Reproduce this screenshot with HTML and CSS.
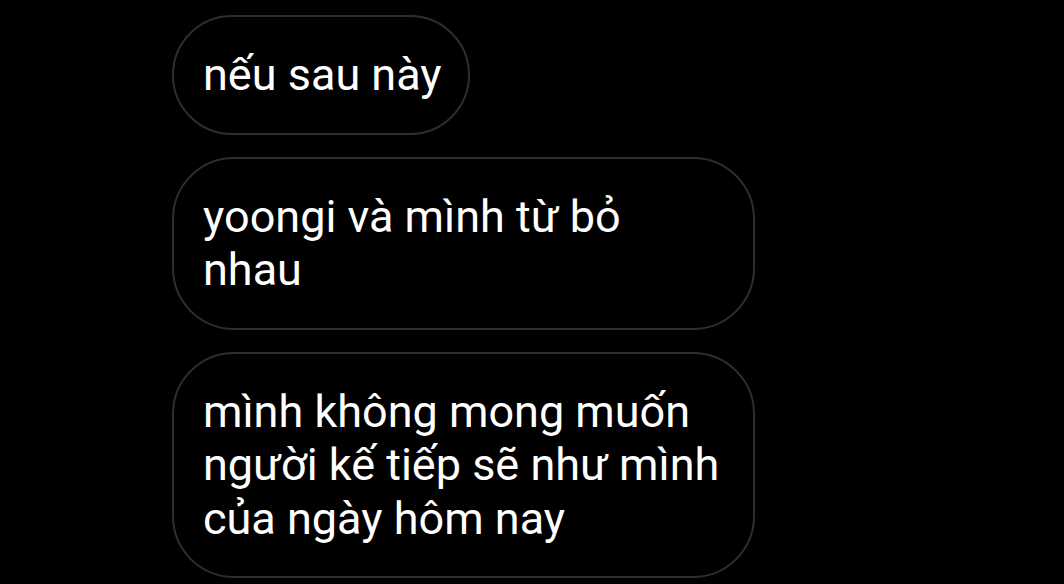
FILE: index.html
```html
<!DOCTYPE html>
<html lang="vi">
<head>
  <meta charset="UTF-8"/>
  <meta name="viewport" content="width=device-width, initial-scale=1.0"/>
  <title>Tin nhắn</title>
  <link rel="stylesheet" href="styles.css">
</head>
<body>

  <!-- TIN NHẮN -->
  <main class="thread">
    <div class="bubble">nếu sau này</div>
    <div class="bubble wide">yoongi và mình từ bỏ<br>nhau</div>
    <div class="bubble wide">mình không mong muốn<br>người kế tiếp sẽ như mình<br>của ngày hôm nay</div>
  </main>

</body>
</html>
```

FILE: styles.css
```css
* {
  margin: 0;
  padding: 0;
  box-sizing: border-box;
}

body {
  font-family: 'Roboto', 'Liberation Sans', sans-serif;
  background: #000;
  color: #fff;
}

.thread {
  display: flex;
  flex-direction: column;
  align-items: flex-start;
  gap: 22px;
  padding: 15px 0 0 172px;
}

.bubble {
  border: 2px solid #2e2e2e;
  border-radius: 62px;
  padding: 31px 26px 31px 29px;
  font-size: 45px;
  line-height: 53.5px;
  white-space: nowrap;
}

.bubble.wide {
  width: 583px;
}
```
